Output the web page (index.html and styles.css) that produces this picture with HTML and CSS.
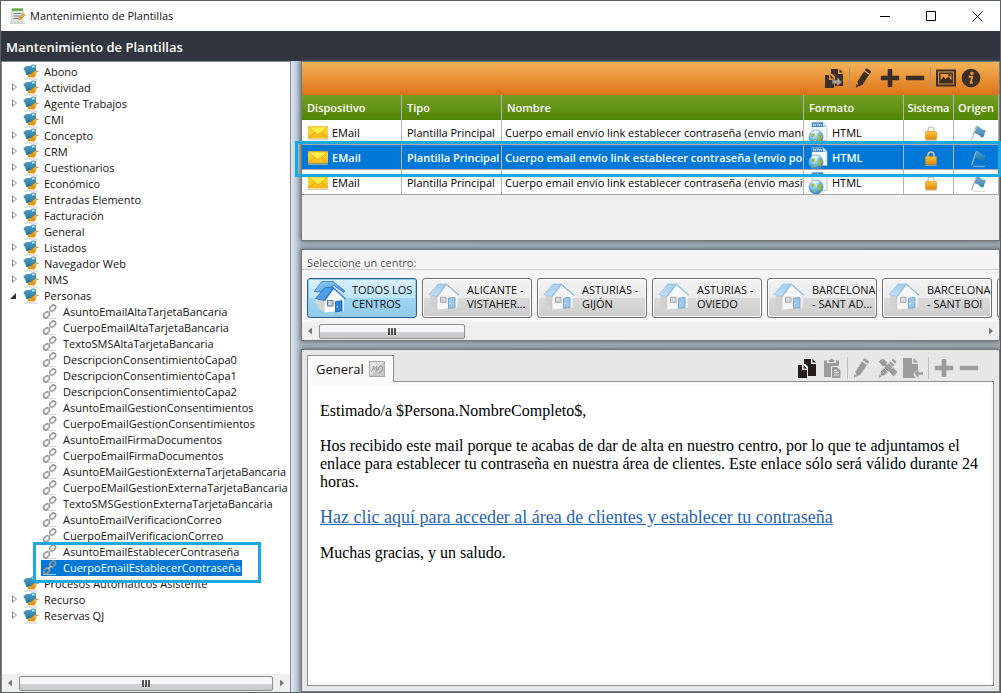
FILE: index.html
```html
<!DOCTYPE html>
<html lang="es">
<head>
<meta charset="utf-8">
<meta name="viewport" content="width=device-width, initial-scale=1">
<title>Mantenimiento de Plantillas</title>
<link rel="stylesheet" href="styles.css">
</head>
<body>
<svg class="defs" aria-hidden="true">
  <defs>
    <linearGradient id="g-blue" x1="0" y1="0" x2="0" y2="1"><stop offset="0" stop-color="#58a3c6"/><stop offset="1" stop-color="#1f6e98"/></linearGradient>
    <linearGradient id="g-gold" x1="0" y1="0" x2="0" y2="1"><stop offset="0" stop-color="#ffc43a"/><stop offset="1" stop-color="#e08a00"/></linearGradient>
    <linearGradient id="g-mail" x1="0" y1="0" x2="0" y2="1"><stop offset="0" stop-color="#ffe23c"/><stop offset="1" stop-color="#fbb617"/></linearGradient>
    <linearGradient id="g-roof" x1="0" y1="0" x2="1" y2="1"><stop offset="0" stop-color="#9ad4f8"/><stop offset="1" stop-color="#3f8fdc"/></linearGradient>
    <linearGradient id="g-roof-soft" x1="0" y1="0" x2="0" y2="1"><stop offset="0" stop-color="#a5cdec"/><stop offset="1" stop-color="#c3e0f5"/></linearGradient>
    <radialGradient id="g-globe" cx=".4" cy=".3" r=".8"><stop offset="0" stop-color="#e4f5ff"/><stop offset=".5" stop-color="#6fb6e6"/><stop offset="1" stop-color="#1e66a8"/></radialGradient>
  </defs>
  <symbol id="i-tag" viewBox="0 0 16 16">
    <path d="M1 15h13" stroke="#bbb" stroke-width=".8"/>
    <path d="M5 10.500L12.500 4l1.500 3.500-2.500 6-6.500-.5z" fill="url(#g-gold)"/>
    <path d="M13.500 7.500H15.500" stroke="#8a7a5a" stroke-width=".8"/>
    <path d="M.3 4.500l3-2.500h4L9.500.3 13 1v5L9 9.300l-5.500 2.200-1.300-4z" fill="url(#g-blue)"/>
    <circle cx="10.300" cy="2.500" r="1.300" fill="#eaf5fa" stroke="#7fa7b8" stroke-width=".5"/>
  </symbol>
  <symbol id="i-link" viewBox="0 0 16 16">
    <path d="M1 14.500h13" stroke="#ccc" stroke-width=".9"/>
    <g fill="none" stroke="#979797" stroke-width="1.600"><rect x="-3.200" y="-2.200" width="6.400" height="4.400" rx="2.200" transform="translate(4.500 10.800) rotate(-45)"/><rect x="-3.200" y="-2.200" width="6.400" height="4.400" rx="2.200" transform="translate(10.700 4) rotate(-45)"/></g>
    <path d="M5.800 9.300l3.500-3.700" stroke="#b9b9b9" stroke-width="1.800"/>
  </symbol>
  <symbol id="i-mail" viewBox="0 0 22 14">
    <path d="M1 13.400h20" stroke="#bbb" stroke-width=".8"/>
    <rect x="1" y=".5" width="20" height="12" rx="1" fill="url(#g-mail)"/>
    <path d="M1.500 12l7-6M20.500 12l-7-6" stroke="#e8a000" stroke-width=".9"/>
    <path d="M1.200.8l8.300 7q1.500 1 3 0l8.300-7z" fill="#fff04e" stroke="#e3a512" stroke-width=".8"/>
  </symbol>
  <symbol id="i-html" viewBox="0 0 21 24">
    <path d="M4.500 1.500h11l4 4v14h-15z" fill="#f4f8fb" stroke="#a9bccb" stroke-width=".8"/>
    <path d="M4.500 1.500h11l2.500 4.500H4.500z" fill="#3d82c4"/><path d="M15.500 1.500l4 4h-4z" fill="#c9e2f4"/>
    <path d="M6 2.700v2.600M8 2.700v2.600M6 4h2M9 3h2.500M10.200 3v2.300M12 5.300V3l1 1 1-1v2.300" stroke="#dff0ff" stroke-width=".7" fill="none"/>
    <circle cx="8.500" cy="16" r="7.200" fill="url(#g-globe)" stroke="#79a8cc" stroke-width=".5"/>
    <path d="M4 13.500q2-2 3.500-1l-.5 2.500-1.500 1.500-2-1.500zM10.500 13.500l3-.5 1 3-1.500 3.500-2 .5-1-3zM6 18.500l2.500.5-1 2.500-1.500-.5z" fill="#9bbb4a"/>
    <path d="M3.500 11.500q4-3.500 9-.5-4 2.500-9 .5z" fill="#fff" opacity=".7"/>
  </symbol>
  <symbol id="i-lock" viewBox="0 0 14 16">
    <path d="M4 7V5q0-3 3-3t3 3v2" fill="none" stroke="#cfccc0" stroke-width="1.600"/>
    <rect x="1.500" y="6.500" width="11" height="8" rx=".8" fill="url(#g-gold)" stroke="#d58a10" stroke-width=".6"/>
    <path d="M1 15.500h12" stroke="#bbb" stroke-width=".6"/>
  </symbol>
  <symbol id="i-flag" viewBox="0 0 17 17">
    <path d="M3 16.300h12" stroke="#ccc" stroke-width=".8"/>
    <path d="M6.500 1L1.500 15.500" stroke="#aeb6ba" stroke-width="1.200"/>
    <path d="M7 1Q9 .8 10.500 3q1.500 2 5.300 2.300L13.300 12.500q-3 0-4.500-2.500Q7.500 8 4.500 8.500z" fill="url(#g-blue)" opacity=".85"/>
  </symbol>
  <symbol id="i-house" viewBox="0 0 32 28">
    <path d="M2.500 12L9 13v13l-6.500-4z" fill="#d0d0d0"/>
    <path d="M9 13l9-11 11.500 10v12.500L9 26.500z" fill="#f6f6f6"/>
    <path d="M9 13v13" stroke="#c4c4c4" stroke-width=".6"/>
    <path d="M.8 11.500L10 1h8.500L9 13.500z" fill="url(#g-roof-soft)" stroke="#8fbde0" stroke-width=".6"/>
    <path d="M9 13.500L18.300 1.200 31 12.300" fill="none" stroke="#93bfe2" stroke-width="1.300"/>
    <path d="M12.500 14.300v5H18v-5z" fill="#d3dce3" stroke="#a5a5a5" stroke-width="1"/>
    <path d="M20.500 15.200l6.500-.7v10l-6.500.8z" fill="#9cc8ec" stroke="#6f9fc6" stroke-width=".9"/><circle cx="22.300" cy="20.500" r=".6" fill="#fff"/>
  </symbol>
  <symbol id="i-houses" viewBox="0 0 34 34">
    <path d="M3 10v13l4 3V10zM24 9l7 5v-3l-5-4z" fill="#dbe3ea"/>
    <path d="M1 11.500L9 1.500h11L32 11l-1.500 1.500L21 5.500 8 12z" fill="url(#g-roof)" stroke="#2467a8" stroke-width=".7"/>
    <path d="M4.500 19l7 1v12l-7-4z" fill="#d0d3d6"/>
    <path d="M11.500 20l9-12L31 18.500v12l-19.500 2z" fill="#fafbfb"/>
    <path d="M2.500 18.500L12 7.500h8.500l-9.500 13z" fill="#4f9fe6" stroke="#2467a8" stroke-width=".7"/>
    <path d="M11.500 20.500l9-12.500L32.500 19" fill="none" stroke="#2f7fcb" stroke-width="1.500"/>
    <path d="M14.500 20.500v5.500H20v-5.500z" fill="#b9d2e6" stroke="#777" stroke-width="1"/>
    <path d="M22.500 21.500l6.500-.8v10l-6.500 1.200z" fill="#2b86dc" stroke="#125ca8" stroke-width=".8"/><circle cx="24.300" cy="26.700" r=".7" fill="#fff"/>
  </symbol>
  <symbol id="i-copy" viewBox="0 0 20 20">
    <path d="M7 1h7v5h5v12h-8V8.500L8.500 6H7z"/><path d="M15.500 1L19 4.500h-3.500z"/>
    <path d="M1 7h4v5h5v8H1z"/><path d="M6.500 7l3.500 3.500H6.500z"/>
  </symbol>
  <symbol id="i-copyto" viewBox="0 0 20 20">
    <use href="#i-copy"/>
    <path d="M8 12h5V9.300l5 4.700-5 4.500v-2.700H8z" fill="#a9a39b" stroke="#4a4037" stroke-width=".6"/>
  </symbol>
  <symbol id="i-pencil" viewBox="0 0 20 20">
    <path d="M2.500 13.500L9 3.500l5 3.300-6.500 10-4 1.700z"/><path d="M9.800 2.300l1-1.500q.5-.6 1.200-.2L15.700 3q.6.500.2 1.200l-1 1.500z"/><path d="M1.500 16l2.300 2-3 1.800z"/>
  </symbol>
  <symbol id="i-pencils" viewBox="0 0 20 20">
    <path d="M.5 3.500L5 .5l4.500 4L5 8.500zM11 13.500l4-4 4.500 4.500-4 4.500z"/><path d="M3 13L12.500 3.500l4 3.500L7 17l-4.500 1z"/><path d="M13.500 2.300L15 .8l3.500 3L17 5.500z"/>
    <path d="M5 5l9.500 9" stroke="currentColor" stroke-width="3"/><path d="M5.500 9.500l5 5M10 4.500l5 5" stroke="#e6e6e6" stroke-width=".8"/><path d="M1.500 16.500l2 2-3 1.500z"/>
  </symbol>
  <symbol id="i-plus" viewBox="0 0 20 20"><path d="M8.500 1h3q.8 0 .8.800v5.900h6q.9 0 .9.900v2.800q0 .9-.9.900h-6v5.900q0 .8-.8.800h-3q-.8 0-.8-.8v-5.900h-6q-.9 0-.9-.9V8.600q0-.9.9-.9h6V1.800q0-.8.800-.8z"/></symbol>
  <symbol id="i-minus" viewBox="0 0 20 20"><rect x=".8" y="7.700" width="18.400" height="4.600" rx="1"/></symbol>
  <symbol id="i-image" viewBox="0 0 20 20">
    <path fill-rule="evenodd" d="M0 1.500h20v17H0zM2 3.500v13h16v-13z"/><path fill-rule="evenodd" d="M3 4.500h14v11H3zM4.500 12.500l3-4 2 2.500 3-2.500 3 4v-6.500h-11z"/><circle cx="13.500" cy="7.300" r="1.200"/>
  </symbol>
  <symbol id="i-info" viewBox="0 0 20 20"><circle cx="10" cy="10" r="9.300"/><circle cx="10.900" cy="5.200" r="1.700" fill="#e88c38"/><path d="M7.500 8.800h3.700l-1.500 6h2.300" fill="none" stroke="#e88c38" stroke-width="1.900"/></symbol>
  <symbol id="i-paste" viewBox="0 0 20 20">
    <path d="M2 2.500h3V5h9V2.500h3V8H9v11H2z"/><path d="M6.500 4V2H8q.2-1.500 1.500-1.500T11 2h1.500v2z"/><path fill-rule="evenodd" d="M10 9h5l3.500 3.500V20H10zM12 12v1h3v-1zM12 14v1h5v-1zM12 16.500v1h5v-1z"/>
  </symbol>
  <symbol id="i-exit" viewBox="0 0 20 20"><path d="M0 0h9v6h6v5.500L10 16l3 4H0z"/><path d="M10.500 0L15 4.500h-4.500z"/><path d="M11.500 15.500l4-4v2.700H20v2.600h-4.500V20z"/></symbol>
  <symbol id="i-doc" viewBox="0 0 16 16">
    <path d="M0 15.200h15" stroke="#bbb"/><path d="M2 .5h11v13.500H1.500z" fill="#e2e5e2" stroke="#b8bdb8" stroke-width=".7"/><path d="M2 .5h11v2.500H2z" fill="#69ad3a"/>
    <path d="M3.500 5.500h8M3.500 8h7M3.500 10.500h5" stroke="#7d8581" stroke-width="1.200"/><path d="M8.500 12L9 9.500l4.500-4 1.500 1.500-4.500 4.500z" fill="#f0a832" stroke="#a87830" stroke-width=".5"/>
  </symbol>
  <symbol id="i-sketch" viewBox="0 0 16 16">
    <rect x=".5" y=".5" width="15" height="15" fill="#e4e4e4" stroke="#aaa"/><path d="M1 15L15 1v14z" fill="#c8c8c8"/><path d="M2.500 11l2.500-6v4l3-4-1 5 2-2M9 9q0-4 2.500-4t2 3-4 4" fill="none" stroke="#9a9a9a" stroke-width="1"/>
  </symbol>
</svg>

<main class="window">
  <header class="titlebar">
    <svg class="ic16"><use href="#i-doc"/></svg>
    <span class="titlebar-text">Mantenimiento de Plantillas</span>
    <button class="winbtn" aria-label="Minimizar"><svg viewBox="0 0 11 11"><path d="M0 5.500h10"/></svg></button>
    <button class="winbtn" aria-label="Maximizar"><svg viewBox="0 0 11 11"><path d="M.5.5h9v9h-9z"/></svg></button>
    <button class="winbtn" aria-label="Cerrar"><svg viewBox="0 0 11 11"><path d="M.5.5l10 10M10.500.5l-10 10"/></svg></button>
  </header>
  <h1 class="heading">Mantenimiento de Plantillas</h1>

  <div class="body">
    <nav class="sidebar" aria-label="Plantillas">
      <ul class="tree">
        <li><div class="node"><svg class="ic16"><use href="#i-tag"/></svg><span>Abono</span></div></li>
        <li><div class="node closed"><svg class="ic16"><use href="#i-tag"/></svg><span>Actividad</span></div></li>
        <li><div class="node closed"><svg class="ic16"><use href="#i-tag"/></svg><span>Agente Trabajos</span></div></li>
        <li><div class="node"><svg class="ic16"><use href="#i-tag"/></svg><span>CMI</span></div></li>
        <li><div class="node closed"><svg class="ic16"><use href="#i-tag"/></svg><span>Concepto</span></div></li>
        <li><div class="node closed"><svg class="ic16"><use href="#i-tag"/></svg><span>CRM</span></div></li>
        <li><div class="node closed"><svg class="ic16"><use href="#i-tag"/></svg><span>Cuestionarios</span></div></li>
        <li><div class="node closed"><svg class="ic16"><use href="#i-tag"/></svg><span>Económico</span></div></li>
        <li><div class="node closed"><svg class="ic16"><use href="#i-tag"/></svg><span>Entradas Elemento</span></div></li>
        <li><div class="node closed"><svg class="ic16"><use href="#i-tag"/></svg><span>Facturación</span></div></li>
        <li><div class="node"><svg class="ic16"><use href="#i-tag"/></svg><span>General</span></div></li>
        <li><div class="node closed"><svg class="ic16"><use href="#i-tag"/></svg><span>Listados</span></div></li>
        <li><div class="node closed"><svg class="ic16"><use href="#i-tag"/></svg><span>Navegador Web</span></div></li>
        <li><div class="node closed"><svg class="ic16"><use href="#i-tag"/></svg><span>NMS</span></div></li>
        <li><div class="node open"><svg class="ic16"><use href="#i-tag"/></svg><span>Personas</span></div>
          <ul class="leaves">
            <li class="leaf"><svg class="ic16"><use href="#i-link"/></svg><span>AsuntoEmailAltaTarjetaBancaria</span></li>
            <li class="leaf"><svg class="ic16"><use href="#i-link"/></svg><span>CuerpoEmailAltaTarjetaBancaria</span></li>
            <li class="leaf"><svg class="ic16"><use href="#i-link"/></svg><span>TextoSMSAltaTarjetaBancaria</span></li>
            <li class="leaf"><svg class="ic16"><use href="#i-link"/></svg><span>DescripcionConsentimientoCapa0</span></li>
            <li class="leaf"><svg class="ic16"><use href="#i-link"/></svg><span>DescripcionConsentimientoCapa1</span></li>
            <li class="leaf"><svg class="ic16"><use href="#i-link"/></svg><span>DescripcionConsentimientoCapa2</span></li>
            <li class="leaf"><svg class="ic16"><use href="#i-link"/></svg><span>AsuntoEmailGestionConsentimientos</span></li>
            <li class="leaf"><svg class="ic16"><use href="#i-link"/></svg><span>CuerpoEmailGestionConsentimientos</span></li>
            <li class="leaf"><svg class="ic16"><use href="#i-link"/></svg><span>AsuntoEmailFirmaDocumentos</span></li>
            <li class="leaf"><svg class="ic16"><use href="#i-link"/></svg><span>CuerpoEmailFirmaDocumentos</span></li>
            <li class="leaf"><svg class="ic16"><use href="#i-link"/></svg><span>AsuntoEMailGestionExternaTarjetaBancaria</span></li>
            <li class="leaf"><svg class="ic16"><use href="#i-link"/></svg><span>CuerpoEMailGestionExternaTarjetaBancaria</span></li>
            <li class="leaf"><svg class="ic16"><use href="#i-link"/></svg><span>TextoSMSGestionExternaTarjetaBancaria</span></li>
            <li class="leaf"><svg class="ic16"><use href="#i-link"/></svg><span>AsuntoEmailVerificacionCorreo</span></li>
            <li class="leaf"><svg class="ic16"><use href="#i-link"/></svg><span>CuerpoEmailVerificacionCorreo</span></li>
            <li class="leaf marked"><svg class="ic16"><use href="#i-link"/></svg><span>AsuntoEmailEstablecerContraseña</span></li>
            <li class="leaf selected"><svg class="ic16"><use href="#i-link"/></svg><span>CuerpoEmailEstablecerContraseña</span></li>
          </ul>
        </li>
        <li><div class="node"><svg class="ic16"><use href="#i-tag"/></svg><span>Procesos Automaticos Asistente</span></div></li>
        <li><div class="node closed"><svg class="ic16"><use href="#i-tag"/></svg><span>Recurso</span></div></li>
        <li><div class="node closed"><svg class="ic16"><use href="#i-tag"/></svg><span>Reservas QJ</span></div></li>
      </ul>
      <div class="scrollbar"><i class="arrow left"></i><div class="track"><div class="thumb"><i class="grip"></i></div></div><i class="arrow right"></i></div>
    </nav>

    <div class="panels">
      <section class="panel templates">
        <div class="toolbar">
          <button aria-label="Duplicar"><svg><use href="#i-copyto"/></svg></button>
          <i class="sep"></i>
          <button aria-label="Editar"><svg><use href="#i-pencil"/></svg></button>
          <button aria-label="Añadir"><svg><use href="#i-plus"/></svg></button>
          <button aria-label="Quitar"><svg><use href="#i-minus"/></svg></button>
          <i class="sep"></i>
          <button aria-label="Imagen"><svg><use href="#i-image"/></svg></button>
          <button aria-label="Información"><svg><use href="#i-info"/></svg></button>
        </div>
        <table class="grid">
          <colgroup><col class="c100"><col class="c100"><col><col class="c100"><col class="c50"><col class="c45"></colgroup>
          <thead><tr><th>Dispositivo</th><th>Tipo</th><th>Nombre</th><th>Formato</th><th class="mid">Sistema</th><th class="mid">Origen</th></tr></thead>
          <tbody>
            <tr><td><div class="cell"><svg class="mail"><use href="#i-mail"/></svg>EMail</div></td><td>Plantilla Principal</td><td class="name">Cuerpo email envío link establecer contraseña (envío manual)</td><td><div class="cell fmt"><svg class="html"><use href="#i-html"/></svg>HTML</div></td><td><div class="cell mid"><svg class="lock"><use href="#i-lock"/></svg></div></td><td><div class="cell mid"><svg class="flag"><use href="#i-flag"/></svg></div></td></tr>
            <tr class="selected"><td><div class="cell"><svg class="mail"><use href="#i-mail"/></svg>EMail</div></td><td>Plantilla Principal</td><td class="name">Cuerpo email envío link establecer contraseña (envío por proceso)</td><td><div class="cell fmt"><svg class="html"><use href="#i-html"/></svg>HTML</div></td><td><div class="cell mid"><svg class="lock"><use href="#i-lock"/></svg></div></td><td><div class="cell mid"><svg class="flag"><use href="#i-flag"/></svg></div></td></tr>
            <tr><td><div class="cell"><svg class="mail"><use href="#i-mail"/></svg>EMail</div></td><td>Plantilla Principal</td><td class="name">Cuerpo email envío link establecer contraseña (envío masivo)</td><td><div class="cell fmt"><svg class="html"><use href="#i-html"/></svg>HTML</div></td><td><div class="cell mid"><svg class="lock"><use href="#i-lock"/></svg></div></td><td><div class="cell mid"><svg class="flag"><use href="#i-flag"/></svg></div></td></tr>
          </tbody>
        </table>
        <div class="row-mark"></div>
      </section>

      <section class="panel centers">
        <h2 class="centers-title">Seleccione un centro:</h2>
        <div class="center-list">
          <button class="center active"><svg><use href="#i-houses"/></svg><span>TODOS LOS<br>CENTROS</span></button>
          <button class="center"><svg><use href="#i-house"/></svg><span>ALICANTE -<br>VISTAHER...</span></button>
          <button class="center"><svg><use href="#i-house"/></svg><span>ASTURIAS -<br>GIJÓN</span></button>
          <button class="center"><svg><use href="#i-house"/></svg><span>ASTURIAS -<br>OVIEDO</span></button>
          <button class="center"><svg><use href="#i-house"/></svg><span>BARCELONA<br>- SANT AD...</span></button>
          <button class="center"><svg><use href="#i-house"/></svg><span>BARCELONA<br>- SANT BOI</span></button>
          <button class="center" aria-label="Siguiente centro"></button>
        </div>
        <div class="scrollbar"><i class="arrow left"></i><div class="track"><div class="thumb part"><i class="grip"></i></div></div><i class="arrow right"></i></div>
      </section>

      <section class="panel editor">
        <div class="editor-head">
          <button class="tab">General<svg class="ic16"><use href="#i-sketch"/></svg></button>
          <div class="tools">
            <button aria-label="Copiar"><svg class="on"><use href="#i-copy"/></svg></button>
            <button aria-label="Pegar" disabled><svg><use href="#i-paste"/></svg></button>
            <i class="sep"></i>
            <button aria-label="Editar" disabled><svg><use href="#i-pencil"/></svg></button>
            <button aria-label="Diseñar" disabled><svg><use href="#i-pencils"/></svg></button>
            <button aria-label="Importar" disabled><svg><use href="#i-exit"/></svg></button>
            <i class="sep"></i>
            <button aria-label="Añadir" disabled><svg><use href="#i-plus"/></svg></button>
            <button aria-label="Quitar" disabled><svg><use href="#i-minus"/></svg></button>
          </div>
        </div>
        <article class="mail-body">
          <p>Estimado/a $Persona.NombreCompleto$,</p>
          <p>Hos recibido este mail porque te acabas de dar de alta en nuestro centro, por lo que te adjuntamos el enlace para establecer tu contraseña en nuestra área de clientes. Este enlace sólo será válido durante 24 horas.</p>
          <p><a href="#">Haz clic aquí para acceder al área de clientes y establecer tu contraseña</a></p>
          <p>Muchas gracias, y un saludo.</p>
        </article>
      </section>
    </div>
  </div>
</main>
</body>
</html>
```

FILE: styles.css
```css
*, *::before, *::after { box-sizing: border-box; }
body {
  margin: 0;
  height: 100vh;
  overflow: hidden;
  background: #55585c;
  color: #111;
  font: 12px/16px "Open Sans", "Noto Sans", sans-serif;
}
button { margin: 0; padding: 0; border: 0; background: none; font: inherit; color: inherit; }
ul { list-style: none; margin: 0; padding: 0; }
.defs { position: absolute; width: 0; height: 0; }
.ic16 { width: 16px; height: 16px; flex: none; }

.window {
  height: 100%;
  display: flex;
  flex-direction: column;
  padding: 1px;
  background: #5d5f62;
}
.titlebar {
  flex: none;
  height: 30px;
  display: flex;
  align-items: center;
  padding-left: 9px;
  background: #fff;
}
.titlebar-text { flex: 1; padding-left: 4px; font-size: 11px; }
.winbtn { width: 46px; height: 30px; display: flex; align-items: center; justify-content: center; }
.winbtn svg { width: 11px; height: 11px; fill: none; stroke: #000; stroke-width: 1; }
.heading {
  flex: none;
  height: 30px;
  margin: 0;
  padding: 0 5px;
  background: #2f3640;
  color: #fff;
  font-size: 13px;
  font-weight: 600;
  line-height: 32px;
}
.body {
  flex: 1;
  min-height: 0;
  display: flex;
  background: linear-gradient(90deg, #dce8f5 290px, #a9b7c2 300px, #a3adb5);
}

/* Tree */
.sidebar {
  flex: none;
  width: 290px;
  display: flex;
  flex-direction: column;
  overflow: hidden;
  background: #fff;
  border: 1px solid #828790;
  border-bottom: 0;
}
.tree { flex: 1; min-height: 0; padding-top: 2px; font-size: 11px; white-space: nowrap; }
.node { display: flex; gap: 5px; height: 16px; padding-left: 21px; position: relative; }
.node::before { position: absolute; left: 10px; top: 3px; width: 5px; height: 8px; }
.node.closed::before {
  content: "";
  background: #888;
  clip-path: polygon(0 0, 100% 50%, 0 100%, 0 0, 1px 2px, 1px 6px, 4px 4px, 1px 2px);
}
.node.open::before {
  content: "";
  left: 8px;
  top: 5px;
  width: 6px;
  height: 6px;
  background: #333;
  clip-path: polygon(100% 0, 100% 100%, 0 100%);
}
.leaves { padding-left: 39px; }
.leaf { position: relative; display: flex; gap: 5px; width: max-content; height: 16px; padding: 0 1px; }
.leaf.selected { background: #0078d7; color: #fff; }
.leaf.marked::after {
  content: "";
  position: absolute;
  z-index: 2;
  left: -8px;
  top: -2px;
  width: 228px;
  height: 41px;
  border: 3px solid #1ba9e1;
}

/* Scroll bars */
.scrollbar { flex: none; height: 18px; display: flex; align-items: center; background: #efefef; }
.arrow { flex: none; width: 17px; height: 7px; background: #777; }
.arrow.left { clip-path: polygon(6px 50%, 10px 0, 10px 100%); }
.arrow.right { clip-path: polygon(11px 50%, 7px 0, 7px 100%); }
.track { flex: 1; }
.thumb {
  height: 15px;
  display: flex;
  align-items: center;
  justify-content: center;
  border: 1px solid #8e8e8e;
  border-radius: 2px;
  background: linear-gradient(#f6f6f6 50%, #d2d2d4 50%, #cacacc);
}
.thumb.part { width: 22%; }
.grip { width: 8px; height: 7px; background: repeating-linear-gradient(90deg, #555 0 2px, transparent 2px 3px); }

/* Right side */
.panels {
  flex: 1;
  min-width: 0;
  display: flex;
  flex-direction: column;
  gap: 8px;
  padding-left: 10px;
}
.panel {
  position: relative;
  flex: none;
  display: flex;
  flex-direction: column;
  border: 1px solid #76797c;
  box-shadow: 0 0 5px #4b545c;
}
.templates { height: 180px; background: #efefef; }
.toolbar, .tools { display: flex; align-items: center; gap: 5px; }
.toolbar {
  flex: none;
  height: 33px;
  justify-content: flex-end;
  padding: 0 18px 2px 0;
  background: linear-gradient(#f3b359, #e99337 50%, #dc7219);
  color: #3a2e26;
}
.toolbar button, .tools button { width: 20px; height: 20px; }
.toolbar svg, .tools svg { display: block; width: 20px; height: 20px; fill: currentColor; }
.sep { width: 1px; height: 22px; background: #a9947a; }
.grid { width: 100%; table-layout: fixed; border-collapse: separate; border-spacing: 0; background: #fff; color: #000; }
.c100 { width: 100px; }
.c50 { width: 50px; }
.c45 { width: 45px; }
.grid th, .grid td {
  height: 25px;
  padding: 0 0 0 5px;
  border-right: 1px solid #b4b4b4;
  font-size: 11px;
  text-align: left;
  white-space: nowrap;
  overflow: hidden;
}
.grid th { background: linear-gradient(#74a024, #659416 45%, #4f8403); color: #fff; font-weight: 600; }
.grid td { padding-top: 2px; border-bottom: 1px solid #a8a8a8; }
.grid td.name { padding-left: 3px; }
.grid th.mid { padding: 0; text-align: center; }
.cell { display: flex; align-items: center; height: 22px; gap: 3px; }
.cell.fmt { margin-left: -2px; }
.cell.mid { justify-content: center; }
.grid tr.selected td { background: #0078d7; color: #fff; font-weight: 600; }
.mail { width: 22px; height: 14px; }
.html { width: 22px; height: 24px; }
.lock { width: 14px; height: 16px; }
.flag { width: 17px; height: 17px; }
.row-mark { position: absolute; left: -7px; right: -2px; top: 79px; height: 36px; border: 3px solid #1ba9e1; }

.centers { height: 92px; background: #f5f5f5; }
.centers-title { margin: 0; padding: 6px 5px 0; height: 20px; border-bottom: 1px solid #ccc; color: #555; font-size: 11px; font-weight: 400; line-height: 14px; }
.center-list { flex: 1; display: flex; gap: 5px; padding: 8px 0 4px 5px; overflow: hidden; }
.center {
  flex: none;
  width: 110px;
  height: 40px;
  display: flex;
  align-items: center;
  padding: 0 0 2px 5px;
  border: 1px solid #707070;
  border-radius: 3px;
  background: linear-gradient(#f3f3f3, #ebebeb 50%, #dadada 50%, #cdcdcd);
  box-shadow: inset 0 0 0 1px #fcfcfc;
  font-size: 11px;
  line-height: 14px;
  text-align: left;
  white-space: nowrap;
}
.center svg { flex: none; width: 32px; height: 28px; margin-right: 7px; }
.center.active { border-color: #2c628b; background: linear-gradient(#d9f0fc, #bee6fd 50%, #a0d5f3 50%, #92caea); box-shadow: inset 0 0 0 1px #8fc8e8; }
.center.active svg { width: 34px; height: 34px; margin-right: 5px; }

.editor { flex: 1; min-height: 0; padding: 5px; background: #e7e7e7; }
.editor-head { flex: none; display: flex; justify-content: space-between; align-items: flex-start; height: 26px; }
.tab {
  position: relative;
  z-index: 1;
  display: flex;
  align-items: center;
  gap: 5px;
  height: 27px;
  padding: 0 8px;
  border: 1px solid #8e9194;
  border-bottom: 0;
  background: #fbfbfb;
  font-size: 13px;
}
.tools { height: 26px; padding-right: 15px; color: #9c9c9c; }
.tools .on { color: #231c1a; }
.tools .sep { background: #bdbdbd; }
.mail-body {
  flex: 1;
  min-height: 0;
  padding: 17px 9px 0;
  border: 1px solid #8e9194;
  outline: 3px solid #fafafa;
  outline-offset: -4px;
  background: #fff;
  color: #000;
  font: 16px/18px "Liberation Serif", "Times New Roman", serif;
}
.mail-body p { margin: 0 0 11px; padding: 3px; }
.mail-body a { color: #1f64b4; font-size: 18px; }
```
